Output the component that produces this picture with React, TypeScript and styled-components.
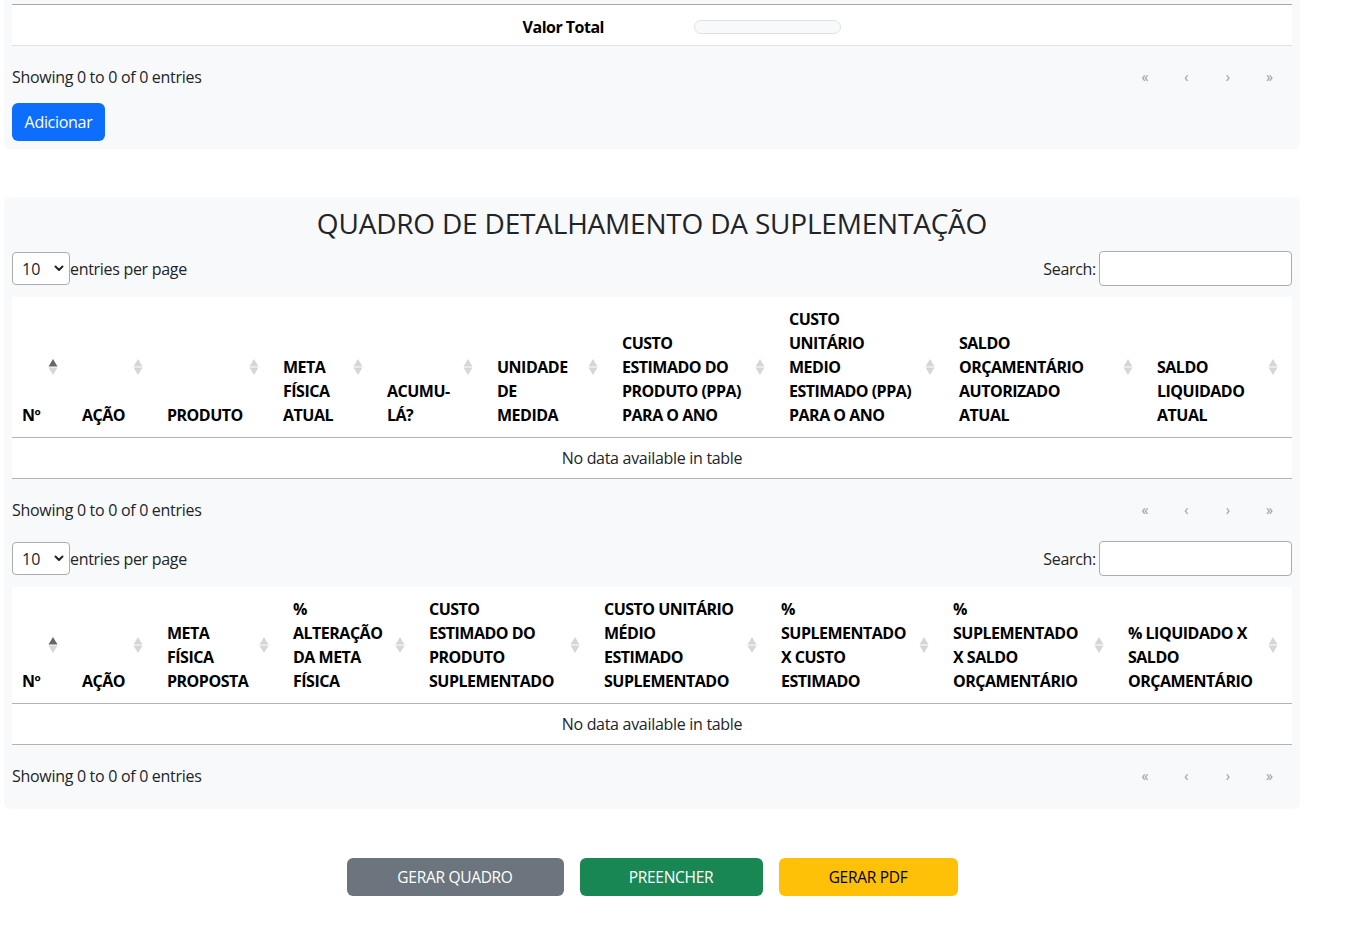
import React from "react";
import styled, { createGlobalStyle } from "styled-components";

const GlobalStyle = createGlobalStyle`
  html, body { margin: 0; padding: 0; background: #ffffff; }
  body {
    font-family: "Open Sans", "Noto Sans", sans-serif;
    font-size: 16px;
    line-height: 24px;
    letter-spacing: -0.3px;
    color: #212529;
  }
  * { box-sizing: border-box; }
`;

const Page = styled.div`
  width: 1300px;
  padding-left: 4px;
  display: flex;
  flex-direction: column;
`;

const Card = styled.section<{ $top?: boolean; $bottomPad?: number }>`
  background: #f8f9fa;
  border-radius: ${(p) => (p.$top ? "0 0 6px 6px" : "6px")};
  padding: ${(p) => (p.$top ? "4px" : "8px")} 8px ${(p) => p.$bottomPad ?? 8}px;
  display: flex;
  flex-direction: column;
`;

const Spacer = styled.div<{ $h: number }>`
  height: ${(p) => p.$h}px;
  flex: none;
`;

const TotalRow = styled.div`
  background: #ffffff;
  border-top: 1px solid #a8a8a8;
  border-bottom: 1px solid #dee2e6;
  height: 42px;
  padding-top: 4px;
  display: flex;
  align-items: center;
`;

const TotalLabel = styled.div`
  width: 601px;
  padding-right: 9px;
  text-align: right;
  font-weight: 700;
  letter-spacing: -0.5px;
  color: #000;
`;

const TotalInput = styled.div`
  margin-left: 81px;
  width: 147px;
  height: 14px;
  background: #f8f9fa;
  border: 1px solid #dee2e6;
  border-radius: 7px;
`;

const InfoRow = styled.div<{ $mt?: number }>`
  margin-top: ${(p) => p.$mt ?? 19}px;
  height: 24px;
  display: flex;
  align-items: center;
  justify-content: space-between;
`;

const InfoText = styled.div`
  color: #212529;
  white-space: nowrap;
`;

const Pager = styled.nav`
  display: flex;
  padding-right: 2px;
`;

const PageBtn = styled.span`
  width: 41.5px;
  text-align: center;
  font-size: 14px;
  color: #959a9f;
  line-height: 24px;
`;

const PrimaryButton = styled.button`
  margin-top: 14px;
  width: 93px;
  height: 38px;
  border: none;
  border-radius: 6px;
  background: #0d6efd;
  color: #fff;
  font-family: inherit;
  font-size: 16px;
  letter-spacing: -0.3px;
  padding: 0;
`;

const Title = styled.h3`
  margin: 0;
  text-align: center;
  font-size: 28px;
  font-weight: 500;
  line-height: 36px;
  letter-spacing: -0.2px;
  color: #212529;
`;

const Controls = styled.div<{ $mt: number }>`
  margin-top: ${(p) => p.$mt}px;
  height: 35px;
  display: flex;
  align-items: center;
  justify-content: space-between;
`;

const LengthBox = styled.label`
  display: flex;
  align-items: center;
`;

const SelectWrap = styled.span`
  position: relative;
  display: inline-flex;
  width: 58px;
  height: 33px;
`;

const Select = styled.select`
  appearance: none;
  -webkit-appearance: none;
  width: 58px;
  height: 33px;
  border: 1px solid #a9acb0;
  border-radius: 4px;
  background: #ffffff;
  font-family: inherit;
  font-size: 16px;
  color: #212529;
  padding: 0 0 0 9px;
`;

const Chevron = styled.svg`
  position: absolute;
  right: 6px;
  top: 13px;
  pointer-events: none;
`;

const SearchBox = styled.label`
  display: flex;
  align-items: center;
  gap: 3px;
`;

const SearchInput = styled.input`
  width: 193px;
  height: 35px;
  border: 1px solid #a9acb0;
  border-radius: 4px;
  background: #fff;
  font-family: inherit;
  font-size: 16px;
`;

const Table = styled.table<{ $mt: number }>`
  margin-top: ${(p) => p.$mt}px;
  width: 1280px;
  table-layout: fixed;
  border-collapse: collapse;
  background: #ffffff;
`;

const Th = styled.th`
  position: relative;
  vertical-align: bottom;
  text-align: left;
  padding: 10px 10px;
  font-size: 16px;
  font-weight: 700;
  line-height: 24px;
  letter-spacing: -0.5px;
  color: #000;
  white-space: nowrap;
  border-bottom: 1px solid #b3b3b3;
`;

const SortIcon = styled.svg`
  position: absolute;
  right: 14px;
  top: 50%;
  transform: translateY(-50%);
`;

const Td = styled.td`
  padding: 8px;
  text-align: center;
  line-height: 24px;
  color: #212529;
  border-bottom: 1px solid #b3b3b3;
`;

const ActionBar = styled.div`
  margin-top: 49px;
  display: flex;
  justify-content: center;
  gap: 16px;
`;

const ActionButton = styled.button<{ $bg: string; $fg: string; $w: number }>`
  width: ${(p) => p.$w}px;
  height: 38px;
  border: none;
  border-radius: 6px;
  background: ${(p) => p.$bg};
  color: ${(p) => p.$fg};
  font-family: inherit;
  font-size: 15.5px;
  letter-spacing: -0.3px;
  padding: 0;
  text-transform: uppercase;
`;

type Col = { w: number; lines: string[] };

const table1: Col[] = [
  { w: 60, lines: ["Nº"] },
  { w: 85, lines: ["AÇÃO"] },
  { w: 116, lines: ["PRODUTO"] },
  { w: 104, lines: ["META", "FÍSICA", "ATUAL"] },
  { w: 110, lines: ["ACUMU-", "LÁ?"] },
  { w: 125, lines: ["UNIDADE", "DE", "MEDIDA"] },
  { w: 167, lines: ["CUSTO", "ESTIMADO DO", "PRODUTO (PPA)", "PARA O ANO"] },
  { w: 170, lines: ["CUSTO", "UNITÁRIO", "MEDIO", "ESTIMADO (PPA)", "PARA O ANO"] },
  { w: 198, lines: ["SALDO", "ORÇAMENTÁRIO", "AUTORIZADO", "ATUAL"] },
  { w: 145, lines: ["SALDO", "LIQUIDADO", "ATUAL"] },
];

const table2: Col[] = [
  { w: 60, lines: ["Nº"] },
  { w: 85, lines: ["AÇÃO"] },
  { w: 126, lines: ["META", "FÍSICA", "PROPOSTA"] },
  { w: 136, lines: ["%", "ALTERAÇÃO", "DA META", "FÍSICA"] },
  { w: 175, lines: ["CUSTO", "ESTIMADO DO", "PRODUTO", "SUPLEMENTADO"] },
  { w: 177, lines: ["CUSTO UNITÁRIO", "MÉDIO", "ESTIMADO", "SUPLEMENTADO"] },
  { w: 172, lines: ["%", "SUPLEMENTADO", "X CUSTO", "ESTIMADO"] },
  { w: 175, lines: ["%", "SUPLEMENTADO", "X SALDO", "ORÇAMENTÁRIO"] },
  { w: 174, lines: ["% LIQUIDADO X", "SALDO", "ORÇAMENTÁRIO"] },
];

const Sort = ({ active }: { active: boolean }) => (
  <SortIcon width="10" height="17" viewBox="0 0 10 17" aria-hidden>
    <polygon points="5,0.5 9.5,8 0.5,8" fill={active ? "#666666" : "#d6d6d6"} />
    <polygon points="0.5,9 9.5,9 5,16.5" fill="#d6d6d6" />
  </SortIcon>
);

const Pagination = () => (
  <Pager>
    <PageBtn>«</PageBtn>
    <PageBtn>‹</PageBtn>
    <PageBtn>›</PageBtn>
    <PageBtn>»</PageBtn>
  </Pager>
);

const Info = ({ mt }: { mt?: number }) => (
  <InfoRow $mt={mt}>
    <InfoText>Showing 0 to 0 of 0 entries</InfoText>
    <Pagination />
  </InfoRow>
);

const ControlsRow = ({ mt }: { mt: number }) => (
  <Controls $mt={mt}>
    <LengthBox>
      <SelectWrap>
        <Select defaultValue="10">
          <option>10</option>
          <option>25</option>
          <option>50</option>
          <option>100</option>
        </Select>
        <Chevron width="10" height="7" viewBox="0 0 10 7">
          <path d="M1.5 1.5 L5 5 L8.5 1.5" fill="none" stroke="#212529" strokeWidth="2" strokeLinecap="round" strokeLinejoin="round" />
        </Chevron>
      </SelectWrap>
      entries per page
    </LengthBox>
    <SearchBox>
      Search:
      <SearchInput type="search" />
    </SearchBox>
  </Controls>
);

const DataTable = ({ cols, mt }: { cols: Col[]; mt: number }) => (
  <Table $mt={mt}>
    <colgroup>
      {cols.map((c, i) => (
        <col key={i} style={{ width: c.w }} />
      ))}
    </colgroup>
    <thead>
      <tr>
        {cols.map((c, i) => (
          <Th key={i}>
            {c.lines.map((l, j) => (
              <React.Fragment key={j}>
                {j > 0 && <br />}
                {l}
              </React.Fragment>
            ))}
            <Sort active={i === 0} />
          </Th>
        ))}
      </tr>
    </thead>
    <tbody>
      <tr>
        <Td colSpan={cols.length}>No data available in table</Td>
      </tr>
    </tbody>
  </Table>
);

export default function App() {
  return (
    <>
      <GlobalStyle />
      <Page>
        <Card $top>
          <TotalRow>
            <TotalLabel>Valor Total</TotalLabel>
            <TotalInput />
          </TotalRow>
          <Info />
          <PrimaryButton>Adicionar</PrimaryButton>
        </Card>
        <Spacer $h={48} />
        <Card $bottomPad={21}>
          <Title>QUADRO DE DETALHAMENTO DA SUPLEMENTAÇÃO</Title>
          <ControlsRow mt={10} />
          <DataTable cols={table1} mt={11} />
          <Info />
          <ControlsRow mt={19} />
          <DataTable cols={table2} mt={11} />
          <Info />
        </Card>
        <ActionBar>
          <ActionButton $bg="#6c757d" $fg="#ffffff" $w={217}>Gerar Quadro</ActionButton>
          <ActionButton $bg="#198754" $fg="#ffffff" $w={183}>Preencher</ActionButton>
          <ActionButton $bg="#ffc107" $fg="#000000" $w={179}>Gerar PDF</ActionButton>
        </ActionBar>
      </Page>
    </>
  );
}
